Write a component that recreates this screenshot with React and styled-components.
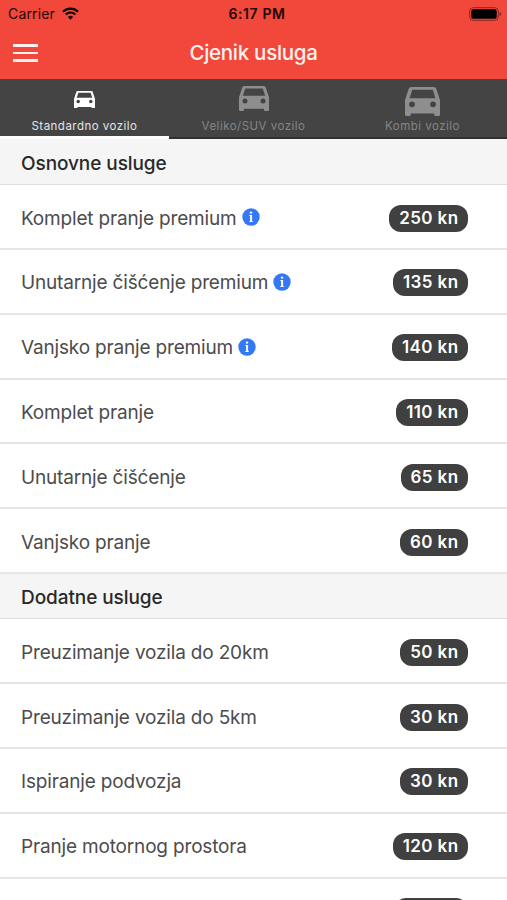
import React, { useState } from "react";
import styled, { createGlobalStyle } from "styled-components";

const GlobalStyle = createGlobalStyle`
  * {
    box-sizing: border-box;
  }
  body {
    margin: 0;
    overflow: hidden;
    background: #fff;
    font-family: Inter, "Liberation Sans", sans-serif;
  }
`;

// Styled Components
const Screen = styled.div`
  height: 900px;
  overflow: hidden;
  background: #fff;
`;

const Header = styled.header`
  height: 79px;
  background: #f2483b;
`;

const StatusBar = styled.div`
  display: grid;
  grid-template-columns: 1fr auto 1fr;
  align-items: center;
  height: 27px;
  padding: 0 5px 0 8px;
  color: #220705;
  font-size: 14px;
`;

const Carrier = styled.div`
  display: flex;
  align-items: center;
  gap: 7px;
  letter-spacing: 0.15px;
`;

const Clock = styled.div`
  padding-left: 4px;
  font-weight: 600;
  letter-spacing: 0.6px;
`;

const BatterySlot = styled.div`
  display: flex;
  justify-content: flex-end;
`;

const NavBar = styled.div`
  display: grid;
  grid-template-columns: 1fr auto 1fr;
  align-items: center;
  height: 52px;
  padding: 0 13px;
`;

const MenuButton = styled.button`
  display: flex;
  flex-direction: column;
  gap: 5px;
  width: 25px;
  padding: 0;
  border: none;
  background: none;
  cursor: pointer;
`;

const MenuLine = styled.span`
  width: 100%;
  height: 2.5px;
  background: #fff1ef;
`;

const Title = styled.h1`
  margin: 0;
  color: #fff1ef;
  font-size: 20.5px;
  font-weight: 500;
  line-height: 26px;
  letter-spacing: -0.28px;
`;

const Tabs = styled.nav`
  display: grid;
  grid-template-columns: repeat(3, 1fr);
  height: 60px;
  background: #444;
`;

const Tab = styled.button`
  display: flex;
  flex-direction: column;
  align-items: center;
  padding: 0;
  border: none;
  border-bottom: ${(props) => (props.$active ? "3px solid #fdfdfd" : "2px solid #303030")};
  background: none;
  color: ${(props) => (props.$active ? "#fff" : "#8e8e8e")};
  font-family: inherit;
  cursor: pointer;
`;

const TabIcon = styled.span`
  display: flex;
  align-items: center;
  justify-content: center;
  height: 38px;
  padding-top: ${(props) => props.$shift}px;
`;

const TabLabel = styled.span`
  color: ${(props) => (props.$active ? "#e4e4e4" : "#858585")};
  font-size: 11.5px;
  line-height: 18px;
  letter-spacing: 0.48px;
`;

const PriceList = styled.main`
  padding-top: 1px;
  background: #f5f5f5;
`;

const SectionTitle = styled.h2`
  display: flex;
  align-items: center;
  height: 45.3px;
  margin: 0;
  padding: 2px 21px 0;
  border-bottom: 1px solid #dedede;
  color: #292929;
  font-size: 19px;
  font-weight: 500;
  letter-spacing: -0.08px;
`;

const Row = styled.div`
  display: flex;
  align-items: center;
  justify-content: space-between;
  height: 64.8px;
  padding: 3px 39px 0 21px;
  border-bottom: 2px solid #e6e6e6;
  background: #fff;
`;

const Service = styled.div`
  display: flex;
  align-items: center;
  gap: 5px;
  color: #4c4c4c;
  font-size: 19px;
  letter-spacing: -0.17px;

  svg {
    margin-bottom: 2px;
  }
`;

const Price = styled.span`
  height: 27px;
  padding: 0 9.5px 0 10px;
  border-radius: 12px;
  background: #404040;
  color: #fff;
  font-size: 17px;
  font-weight: 600;
  line-height: 27px;
  letter-spacing: 0.4px;
`;

// Top edge of the next row's price, just scrolling into view
const NextPrice = styled.div`
  display: flex;
  justify-content: flex-end;
  padding: 19px 39px 0;
  background: #fff;

  &::after {
    content: "";
    width: 74px;
    height: 27px;
    border-radius: 12px;
    background: #404040;
  }
`;

const sections = [
    {
        title: "Osnovne usluge",
        items: [
            { name: "Komplet pranje premium", price: 250, info: true },
            { name: "Unutarnje čišćenje premium", price: 135, info: true },
            { name: "Vanjsko pranje premium", price: 140, info: true },
            { name: "Komplet pranje", price: 110 },
            { name: "Unutarnje čišćenje", price: 65 },
            { name: "Vanjsko pranje", price: 60 },
        ],
    },
    {
        title: "Dodatne usluge",
        items: [
            { name: "Preuzimanje vozila do 20km", price: 50 },
            { name: "Preuzimanje vozila do 5km", price: 30 },
            { name: "Ispiranje podvozja", price: 30 },
            { name: "Pranje motornog prostora", price: 120 },
        ],
    },
];

const vehicles = [
    { label: "Standardno vozilo", size: 21, shift: 3 },
    { label: "Veliko/SUV vozilo", size: 30, shift: 1 },
    { label: "Kombi vozilo", size: 35, shift: 7 },
];

const CarIcon = ({ size }) => (
    <svg width={size} height={(size * 20) / 24} viewBox="0 0 24 20" fill="currentColor">
        <path
            fillRule="evenodd"
            d="M4.4 0h15.2c.9 0 1.6.5 1.9 1.3L24 9v9.9c0 .7-.5 1.1-1.1 1.1h-1.8c-.7 0-1.1-.5-1.1-1.1v-.7H4v.7c0 .6-.4 1.1-1.1 1.1H1.1C.5 20 0 19.6 0 18.9V9l2.5-7.7C2.8.5 3.5 0 4.4 0zM5 1.9L3.1 7.8h17.8L19 1.9zM4.8 9.9a2 2 0 1 0 0 4 2 2 0 0 0 0-4zM19.2 9.9a2 2 0 1 0 0 4 2 2 0 0 0 0-4z"
        />
    </svg>
);

const WifiIcon = () => (
    <svg width="17" height="13" viewBox="0 0 17 13" fill="none" stroke="#100201" strokeWidth="2.2">
        <path d="M1 4.7a10.6 10.6 0 0 1 15 0M3.7 7.5a6.8 6.8 0 0 1 9.6 0" />
        <path d="M8.5 12.7L5.9 10a3.7 3.7 0 0 1 5.2 0z" fill="#100201" stroke="none" />
    </svg>
);

const BatteryIcon = () => (
    <svg width="33" height="14" viewBox="0 0 33 14">
        <rect x="0.7" y="0.7" width="28.6" height="12.6" rx="3.5" fill="none" stroke="#8a251e" />
        <rect x="2.3" y="2.3" width="25.4" height="9.4" rx="1.8" fill="#000" />
        <path d="M30.7 5v4c1-.3 1.5-1.1 1.5-2s-.5-1.7-1.5-2z" fill="#8a251e" />
    </svg>
);

const InfoIcon = () => (
    <svg width="18" height="18" viewBox="0 0 18 18">
        <circle cx="9" cy="9" r="8.7" fill="#3478f6" />
        <circle cx="9" cy="4.6" r="1.2" fill="#fff" />
        <path d="M7.3 7h2.8v6.2h.9v.9H7.1v-.9h1V7.9h-.8z" fill="#fff" />
    </svg>
);

const App = () => {
    const [active, setActive] = useState(0);

    return (
        <Screen>
            <GlobalStyle />
            <Header>
                <StatusBar>
                    <Carrier>
                        Carrier
                        <WifiIcon />
                    </Carrier>
                    <Clock>6:17 PM</Clock>
                    <BatterySlot>
                        <BatteryIcon />
                    </BatterySlot>
                </StatusBar>
                <NavBar>
                    <MenuButton aria-label="Menu">
                        <MenuLine />
                        <MenuLine />
                        <MenuLine />
                    </MenuButton>
                    <Title>Cjenik usluga</Title>
                </NavBar>
            </Header>

            <Tabs>
                {vehicles.map((vehicle, index) => (
                    <Tab key={vehicle.label} $active={index === active} onClick={() => setActive(index)}>
                        <TabIcon $shift={vehicle.shift}>
                            <CarIcon size={vehicle.size} />
                        </TabIcon>
                        <TabLabel $active={index === active}>{vehicle.label}</TabLabel>
                    </Tab>
                ))}
            </Tabs>

            <PriceList>
                {sections.map((section) => (
                    <section key={section.title}>
                        <SectionTitle>{section.title}</SectionTitle>
                        {section.items.map((item) => (
                            <Row key={item.name}>
                                <Service>
                                    {item.name}
                                    {item.info && <InfoIcon />}
                                </Service>
                                <Price>{item.price} kn</Price>
                            </Row>
                        ))}
                    </section>
                ))}
                <NextPrice />
            </PriceList>
        </Screen>
    );
};

export default App;
